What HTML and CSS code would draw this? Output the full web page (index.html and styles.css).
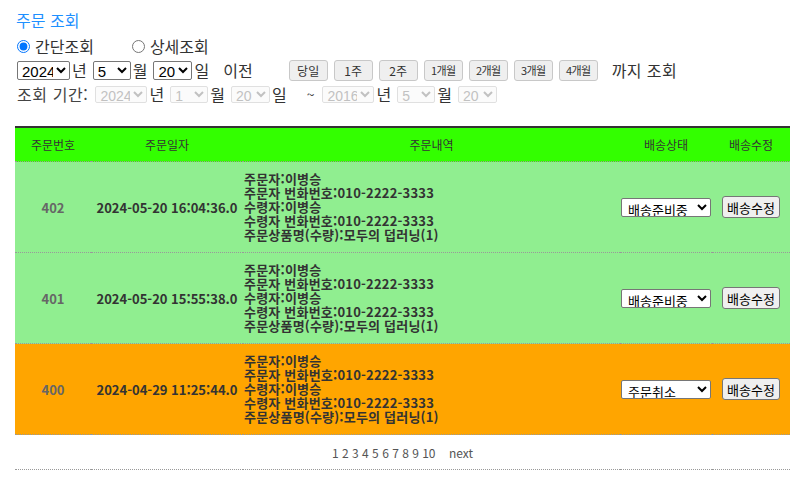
FILE: index.html
```html
<!DOCTYPE html>
<html lang="ko">
<head>
<meta charset="utf-8">
<title>주문 조회</title>
<link rel="stylesheet" href="styles.css">
</head>
<body>
<div class="search">
  <div class="title">주문 조회</div>
  <div class="row radios">
    <label class="radio-item"><input type="radio" name="mode" checked>간단조회</label>
    <label class="radio-item second"><input type="radio" name="mode">상세조회</label>
  </div>
  <div class="row">
    <select class="sel sel-y"><option>2024</option></select><span class="unit">년</span>
    <select class="sel sel-m"><option>5</option></select><span class="unit">월</span>
    <select class="sel sel-d"><option>20</option></select><span class="unit">일</span>
    <span class="before">이전</span>
    <div class="btns">
      <button class="qbtn">당일</button>
      <button class="qbtn">1주</button>
      <button class="qbtn">2주</button>
      <button class="qbtn small">1개월</button>
      <button class="qbtn small">2개월</button>
      <button class="qbtn small">3개월</button>
      <button class="qbtn small">4개월</button>
    </div>
    <span class="until">까지 조회</span>
  </div>
  <div class="row period">
    <span class="plabel">조회 기간:</span>
    <select class="sel dis sel-y first" disabled><option>2024</option></select><span class="unit">년</span>
    <select class="sel dis sel-m" disabled><option>1</option></select><span class="unit">월</span>
    <select class="sel dis sel-d" disabled><option>20</option></select><span class="unit">일</span>
    <span class="tilde">~</span>
    <select class="sel dis sel-y" disabled><option>2016</option></select><span class="unit">년</span>
    <select class="sel dis sel-m" disabled><option>5</option></select><span class="unit">월</span>
    <select class="sel dis sel-d" disabled><option>20</option></select>
  </div>
</div>

<table class="orders">
  <colgroup>
    <col class="c1"><col class="c2"><col class="c3"><col class="c4"><col class="c5">
  </colgroup>
  <thead>
    <tr>
      <th>주문번호</th><th>주문일자</th><th>주문내역</th><th>배송상태</th><th>배송수정</th>
    </tr>
  </thead>
  <tbody>
    <tr class="ready">
      <td class="num">402</td>
      <td class="date">2024-05-20 16:04:36.0</td>
      <td class="detail"><div class="line">주문자:이병승</div><div class="line">주문자 번화번호:010-2222-3333</div><div class="line">수령자:이병승</div><div class="line">수령자 번화번호:010-2222-3333</div><div class="line">주문상품명(수량):모두의 덥러닝(1)</div></td>
      <td class="status"><select class="stsel"><option>배송준비중</option></select></td>
      <td class="edit"><button class="ebtn">배송수정</button></td>
    </tr>
    <tr class="ready">
      <td class="num">401</td>
      <td class="date">2024-05-20 15:55:38.0</td>
      <td class="detail"><div class="line">주문자:이병승</div><div class="line">주문자 번화번호:010-2222-3333</div><div class="line">수령자:이병승</div><div class="line">수령자 번화번호:010-2222-3333</div><div class="line">주문상품명(수량):모두의 덥러닝(1)</div></td>
      <td class="status"><select class="stsel"><option>배송준비중</option></select></td>
      <td class="edit"><button class="ebtn">배송수정</button></td>
    </tr>
    <tr class="cancel">
      <td class="num">400</td>
      <td class="date">2024-04-29 11:25:44.0</td>
      <td class="detail"><div class="line">주문자:이병승</div><div class="line">주문자 번화번호:010-2222-3333</div><div class="line">수령자:이병승</div><div class="line">수령자 번화번호:010-2222-3333</div><div class="line">주문상품명(수량):모두의 덥러닝(1)</div></td>
      <td class="status"><select class="stsel"><option>주문취소</option></select></td>
      <td class="edit"><button class="ebtn">배송수정</button></td>
    </tr>
    <tr class="pager">
      <td colspan="5">1 2 3 4 5 6 7 8 9 10 <span class="next">next</span></td>
    </tr>
  </tbody>
</table>
</body>
</html>
```

FILE: styles.css
```css
html, body {
  margin: 0;
  padding: 0;
  background: #fff;
}
body {
  padding: 9px 9px 0 15px;
  font-family: "Noto Sans CJK KR", "Noto Sans", sans-serif;
  color: #333;
}
.title {
  font-size: 16px;
  line-height: 22px;
  height: 22px;
  color: #1e90ff;
  padding-left: 1px;
}
.row {
  display: flex;
  align-items: center;
  height: 22px;
  font-size: 16px;
  line-height: 22px;
  white-space: nowrap;
}
.radios {
  margin-top: 4px;
}
.radio-item {
  display: flex;
  align-items: center;
}
.radio-item input {
  margin: 0 5px 0 2px;
  width: 13px;
  height: 13px;
}
.radio-item.second {
  margin-left: 36px;
}
.row + .row {
  margin-top: 2px;
}
.sel {
  font-family: "Liberation Sans", Arial, sans-serif;
  font-size: 15px;
  height: 19px;
  padding: 0;
  margin: 0;
  border: 1px solid #767676;
  border-radius: 2px;
  background: #fff;
  color: #000;
}
.sel-y { width: 53px; margin-left: 2px; }
.sel-m { width: 38px; margin-left: 6px; }
.sel-d { width: 39px; margin-left: 6px; }
.unit {
  margin-left: 2px;
  color: #333;
}
.before {
  margin-left: 14px;
}
.btns {
  display: flex;
  gap: 6px;
  margin-left: 36px;
}
.qbtn {
  width: 39px;
  height: 21px;
  padding: 0;
  font-family: "Noto Sans CJK KR", sans-serif;
  font-size: 12px;
  line-height: 19px;
  color: #333;
  background: #efefef;
  border: 1px solid #c8c8c8;
  border-radius: 3px;
}
.qbtn.small {
  font-size: 11px;
  letter-spacing: -0.6px;
}
.until {
  margin-left: 14px;
  letter-spacing: 0.4px;
}
.period .plabel {
  margin-left: 2px;
  color: #444;
  letter-spacing: 0.6px;
}
.period .sel.first { margin-left: 7px; }
.sel.dis {
  height: 17px;
  font-size: 14px;
  color: #a8a8a8;
  border: 1px solid #d4d4d4;
  background: #fafafa;
}
.period .dis.sel-y { width: 52px; }
.tilde {
  margin-left: 20px;
  margin-right: 6px;
  font-size: 14px;
}
.orders {
  margin-top: 21px;
  width: 775px;
  border-collapse: collapse;
  table-layout: fixed;
  border-top: 2px solid #333;
  font-family: "Noto Sans CJK KR", sans-serif;
}
.c1 { width: 76px; }
.c2 { width: 152px; }
.c3 { width: 377px; }
.c4 { width: 92px; }
.c5 { width: 78px; }
.orders th {
  background: #33ff00;
  height: 33px;
  padding: 0;
  font-size: 12px;
  font-weight: 400;
  color: #333;
  border-bottom: 1px dotted #999;
}
.orders td {
  padding: 0;
  border-bottom: 1px dotted #999;
  font-size: 13px;
  font-weight: 700;
  color: #333;
  text-align: center;
}
.ready td { background: #90ee90; }
.cancel td { background: #ffa500; }
.orders td.num {
  color: #666;
}
.orders td.date {
  letter-spacing: 0;
}
.orders td.detail {
  text-align: left;
  padding: 10px 0 10px 1px;
  height: 70px;
  white-space: nowrap;
  letter-spacing: 0.2px;
}
.detail .line {
  height: 14px;
  line-height: 14px;
}
.stsel {
  width: 90px;
  height: 19px;
  font-family: "Noto Sans CJK KR", sans-serif;
  font-size: 13px;
  padding: 0 0 0 2px;
  border: 1px solid #767676;
  border-radius: 2px;
  background: #fff;
  color: #000;
  vertical-align: middle;
}
.ebtn {
  height: 22px;
  width: 58px;
  padding: 0;
  font-family: "Noto Sans CJK KR", sans-serif;
  font-size: 13px;
  color: #000;
  background: #efefef;
  border: 1px solid #767676;
  border-radius: 3px;
  vertical-align: middle;
}
.orders td.edit {
  text-align: left;
  padding-left: 10px;
}
.pager td {
  background: #fff;
  height: 34px;
  font-size: 12px;
  font-weight: 400;
  color: #555;
}
.next {
  margin-left: 10px;
}
```
